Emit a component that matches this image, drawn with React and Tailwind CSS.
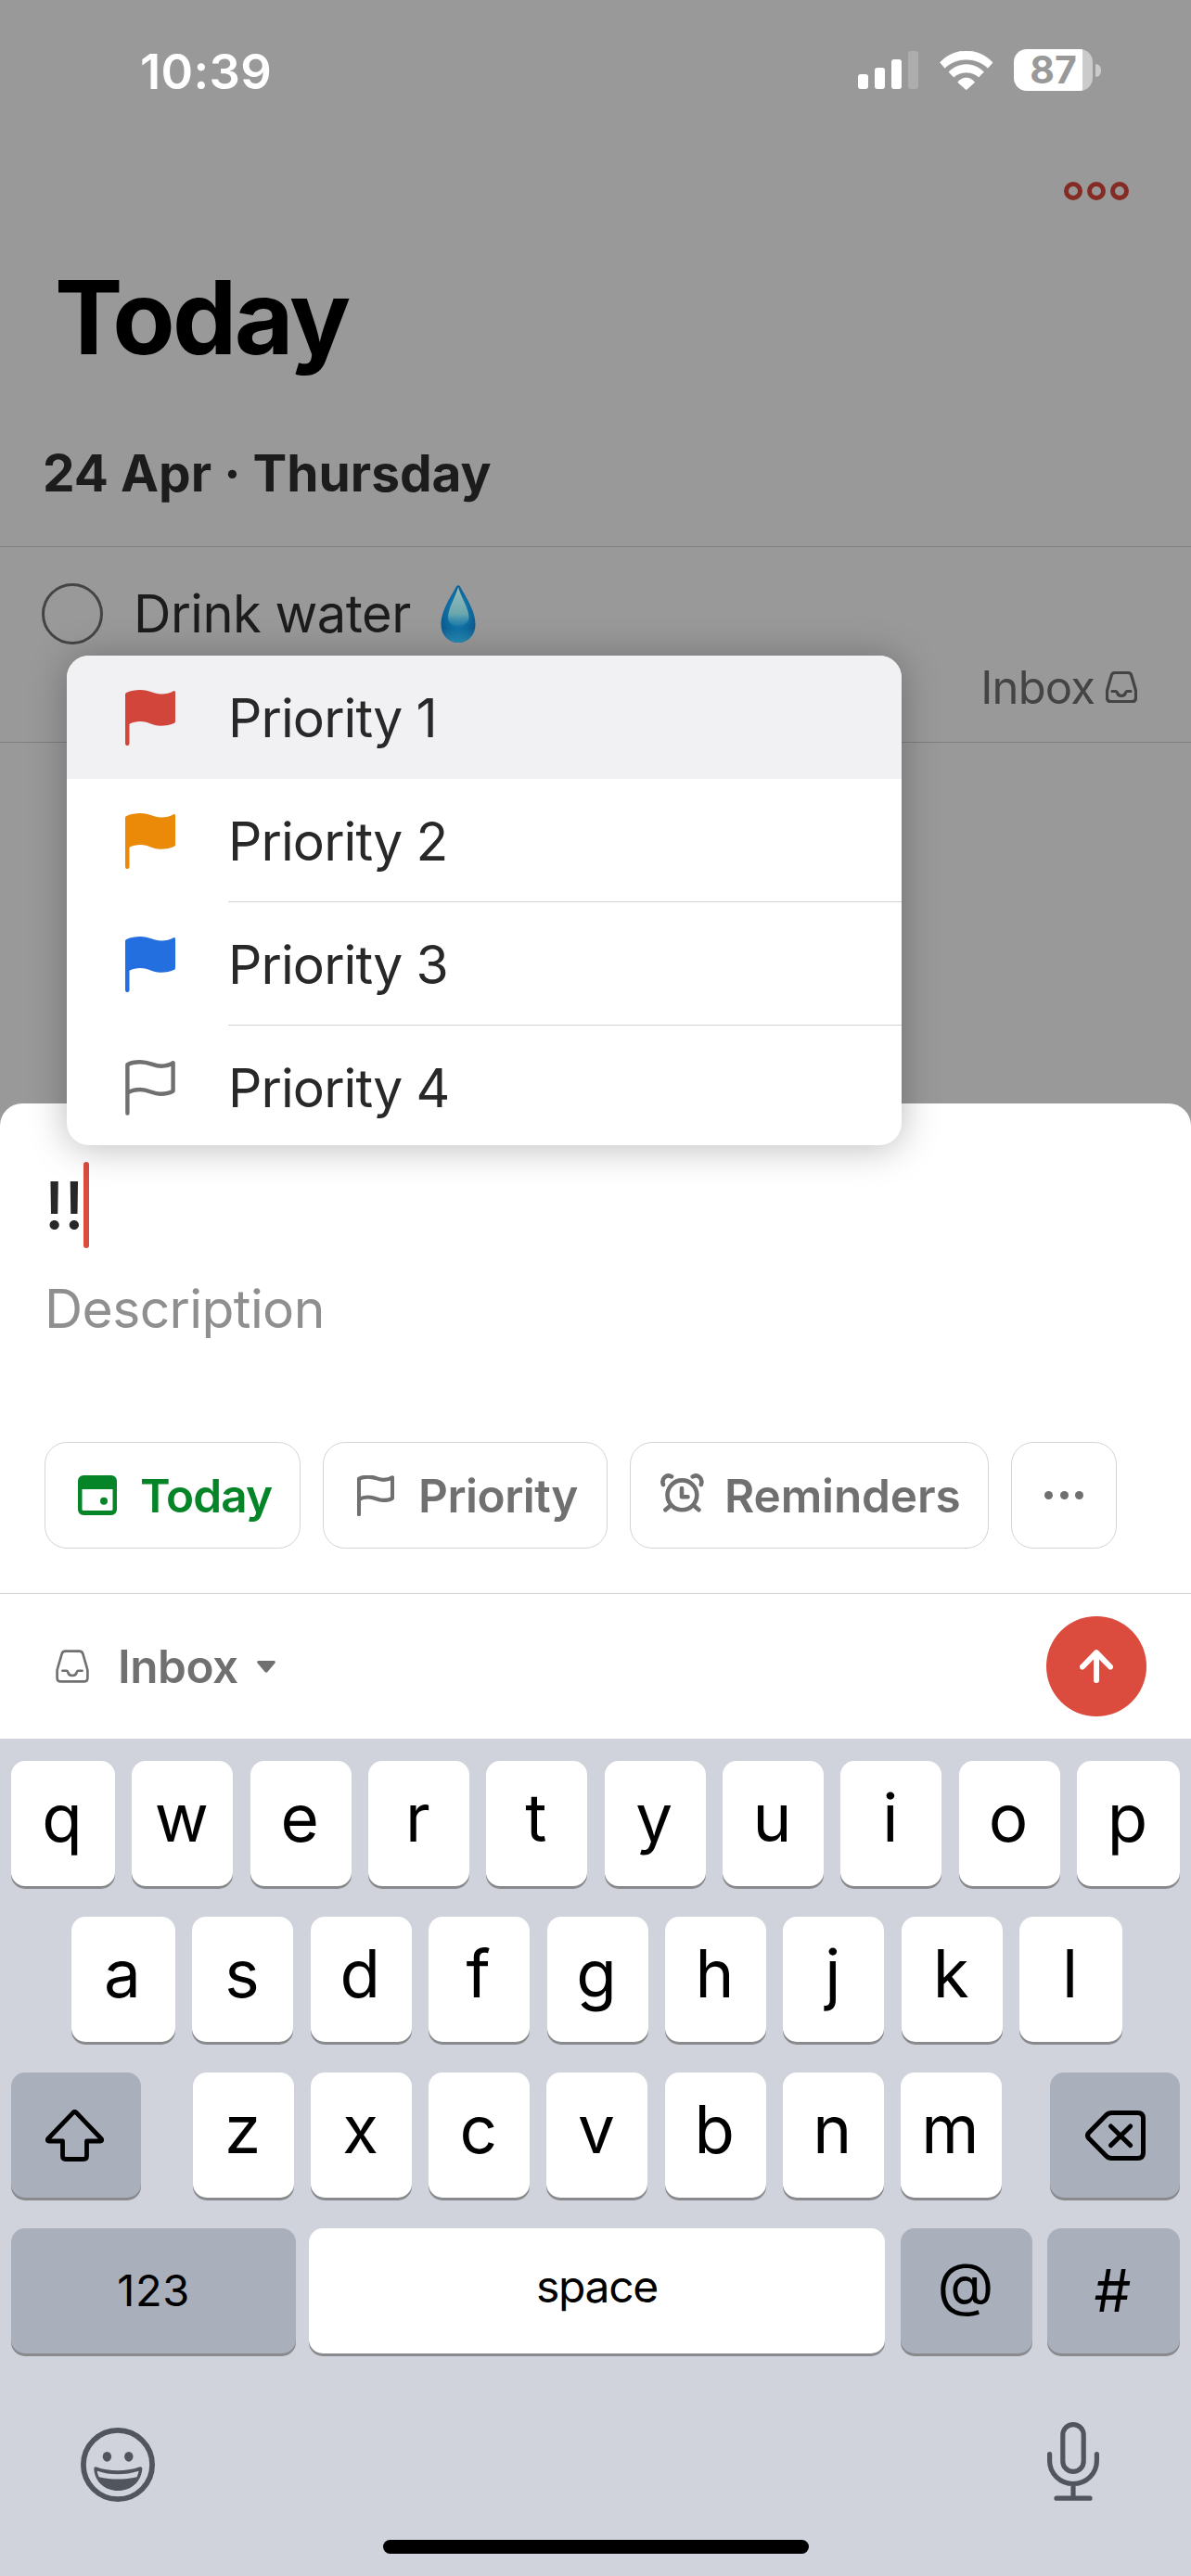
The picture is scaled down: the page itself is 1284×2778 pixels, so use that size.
import clsx from "clsx"

const priorities = [
  { label: "Priority 1", color: "text-[#d1453b]", filled: true, active: true },
  { label: "Priority 2", color: "text-[#eb8909]", filled: true },
  { label: "Priority 3", color: "text-[#246fe0]", filled: true },
  { label: "Priority 4", color: "text-[#707070]", filled: false }
]

function FlagIcon({ filled, strokeWidth = 4.4, className }) {
  return (
    <svg viewBox="0 0 54 60" className={className}>
      {filled ? (
        <path
          fill="currentColor"
          d="M0 5Q0 3.7 1.3 3C6 .8 11 0 16 0C27 0 30 4.5 39 4.5C44 4.5 48 3.3 52 1.2Q54 .4 54 2.5V34Q54 35.2 53 35.8C49 37.8 44 38.8 38 38.8C29 38.8 26 34 16 34C12 34 8 35 4.5 36.7V57.8a2.25 2.25 0 0 1-4.5 0Z"
        />
      ) : (
        <path
          fill="none"
          stroke="currentColor"
          strokeWidth={strokeWidth}
          strokeLinecap="round"
          strokeLinejoin="round"
          d="M2.4 57.6V5.2C6 3 11 2.2 16 2.2C27 2.2 30 6.7 39 6.7C44 6.7 48 5.5 51.6 3.2V33.6C48 35.8 44 36.7 38 36.7C29 36.7 26 32 16 32C11 32 6 33.3 2.4 35.5"
        />
      )}
    </svg>
  )
}

function InboxIcon({ strokeWidth, className }) {
  return (
    <svg
      viewBox="0 0 34 34"
      fill="none"
      stroke="currentColor"
      strokeWidth={strokeWidth}
      strokeLinecap="round"
      className={className}
    >
      <path d="M10 1.5H24Q27 1.5 27.8 4.5L32 19Q32.5 20.5 32.5 22V28.5Q32.5 32.5 28.5 32.5H5.5Q1.5 32.5 1.5 28.5V22Q1.5 20.5 2 19L6.2 4.5Q7 1.5 10 1.5Z" />
      <path d="M7 21.5H11Q12 21.5 12.5 23C13.8 27.6 20.2 27.6 21.5 23Q22 21.5 23 21.5H27" />
    </svg>
  )
}

function StatusBar() {
  return (
    <div className="flex h-[154px] shrink-0 items-center justify-between pl-[151px] pr-[97px]">
      <span className="text-[52.5px] font-semibold leading-none tracking-[0.3px] text-white">
        10:39
      </span>
      <div className="mb-[3px] flex items-center">
        <svg viewBox="0 0 65 41" className="h-[41px] w-[65px]" fill="#fff">
          <rect x="0" y="25" width="11" height="16" rx="3" />
          <rect x="18" y="18" width="11" height="23" rx="3" />
          <rect x="36" y="9" width="11" height="32" rx="3" />
          <rect x="54" y="0" width="11" height="41" rx="3" opacity=".2" />
        </svg>
        <svg
          viewBox="0 0 57.5 42"
          className="ml-[23px] h-[42px] w-[57.5px]"
          fill="#fff"
          stroke="#fff"
          strokeWidth=".8"
          strokeLinejoin="round"
        >
          <path d="M.6 12.4C16-4 41.4-4 57 12.4L52 18.2C39 6 18.4 6 5.6 18.2Z" />
          <path d="M10 22.6C20.5 12.1 37 12.1 47.4 22.6L42.2 28C34.5 21.3 23 21.3 15.2 28Z" />
          <path d="M19.7 33.7C25 27.5 32.4 27.5 37.7 33.7L28.7 41.8Z" />
        </svg>
        <div className="ml-[22.5px] flex h-[45px] w-[85px] items-center justify-center rounded-[14px] bg-linear-to-r from-white from-87% to-[#cbcbcb] to-87%">
          <span className="text-[41px] font-bold leading-none text-[#999999]">87</span>
        </div>
        <div className="ml-[3px] h-[14px] w-[6px] rounded-r-full bg-[#cbcbcb]" />
      </div>
    </div>
  )
}

function DropIcon({ className }) {
  const shape =
    "M17 1.5Q19 -1 21 1.5C26 11 37.5 27 37.5 42.5C37.5 54 29.5 62 19 62S.5 54 .5 42.5C.5 27 12 11 17 1.5Z"

  return (
    <svg viewBox="0 0 38 62" className={className} role="img" aria-label="💧">
      <defs>
        <radialGradient id="drop" cx=".5" cy=".48" r=".56">
          <stop offset="0" stopColor="#2b8fb8" />
          <stop offset=".55" stopColor="#0f6ea3" />
          <stop offset="1" stopColor="#0d588c" />
        </radialGradient>
        <linearGradient id="shine" x1="0" y1="0" x2="0" y2="1">
          <stop offset="0" stopColor="#9dbcbd" />
          <stop offset=".7" stopColor="#6ba7ae" />
          <stop offset="1" stopColor="#2f88ab" stopOpacity=".5" />
        </linearGradient>
        <linearGradient id="glow" x1="0" y1="0" x2="0" y2="1">
          <stop offset=".75" stopColor="#2f9bbf" stopOpacity="0" />
          <stop offset="1" stopColor="#2f9bbf" stopOpacity=".8" />
        </linearGradient>
      </defs>
      <path fill="url(#drop)" d={shape} />
      <path fill="url(#glow)" d={shape} />
      <path
        fill="url(#shine)"
        d="M19 2C22 13 30.5 25 30.5 35C30.5 41 25 43.5 19 43.5S8 41 8 35C8 25 16 13 19 2Z"
      />
    </svg>
  )
}

function TaskList() {
  return (
    <>
      <div className="flex h-[104px] shrink-0 items-center justify-end gap-[5px] pr-[67px]">
        {[0, 1, 2].map((i) => (
          <span key={i} className="h-[20px] w-[20px] rounded-full border-[5px] border-[#842c24]" />
        ))}
      </div>
      <h1 className="flex h-[168px] shrink-0 items-center pl-[59px] text-[110px] font-bold leading-none tracking-[-2.65px] text-black">
        Today
      </h1>
      <h2 className="flex h-[164px] shrink-0 items-center border-b border-[#7f7f7f] pl-[46px] pt-[5px] text-[55px] font-bold leading-none text-[#1c1c1c]">
        24 Apr · Thursday
      </h2>
      <div className="h-[211px] shrink-0 border-b border-[#7f7f7f]">
        <div className="flex h-[144px] items-center pl-[45px]">
          <span className="h-[66px] w-[66px] rounded-full border-[3px] border-[#444444]" />
          <span className="ml-[33px] text-[56px] leading-none tracking-[-0.5px] text-[#1c1c1c]">
            Drink water
          </span>
          <DropIcon className="ml-[32px] h-[62px] w-[38px]" />
        </div>
        <div className="flex h-[14px] items-center justify-end pr-[58px] text-[#444444]">
          <span className="text-[49px] leading-none tracking-[-0.9px]">Inbox</span>
          <InboxIcon strokeWidth={3.2} className="ml-[12px] h-[34px] w-[34px]" />
        </div>
      </div>
      <div className="h-[389px] shrink-0" />
    </>
  )
}

function PriorityMenu() {
  return (
    <div className="absolute left-[72px] top-[707px] h-[528px] w-[900px] overflow-hidden rounded-[24px] bg-white shadow-[0_2px_42px_rgba(0,0,0,0.28)]">
      {priorities.map(({ label, color, filled, active }, i) => (
        <div
          key={label}
          className={clsx("flex h-[133px] items-center pl-[63px]", active && "bg-[#f1f1f4]")}
        >
          <FlagIcon filled={filled} className={clsx("h-[60px] w-[54px]", color)} />
          <div
            className={clsx(
              "ml-[57px] flex h-full grow items-center border-b pt-[2px] text-[57px] leading-none tracking-[-0.9px] text-[#282828]",
              i === 1 || i === 2 ? "border-[#d2d2d2]" : "border-transparent"
            )}
          >
            {label}
          </div>
        </div>
      ))}
    </div>
  )
}

function Chip({ className, children }) {
  return (
    <button
      className={clsx(
        "flex h-[115px] items-center rounded-[24px] border border-[#d4d4d4] text-[49.5px] font-semibold leading-none",
        className
      )}
    >
      {children}
    </button>
  )
}

function QuickAdd() {
  return (
    <div className="h-[685px] shrink-0 rounded-t-[24px] bg-white pt-[63px]">
      <div className="flex h-[93px] items-center pl-[48px]">
        <span className="text-[70px] font-medium leading-none text-[#282828]">!!</span>
        <span className="-ml-[1px] h-[93px] w-[6px] rounded-full bg-[#db4c3f]" />
      </div>
      <p className="flex h-[130px] items-center pl-[48px] text-[57px] leading-none tracking-[-0.6px] text-[#8f8f8f]">
        Description
      </p>
      <div className="mt-[79px] flex gap-[24px] pl-[48px] text-[#707070]">
        <Chip className="w-[276px] pl-[35px] text-[#058527]">
          <svg viewBox="0 0 42 43" className="h-[43px] w-[42px]" fill="currentColor">
            <path
              fillRule="evenodd"
              d="M6 0H36a6 6 0 0 1 6 6V37a6 6 0 0 1-6 6H6a6 6 0 0 1-6-6V6a6 6 0 0 1 6-6ZM4.5 15V36.5a1.5 1.5 0 0 0 1.5 1.5H36a1.5 1.5 0 0 0 1.5-1.5V15Z"
            />
            <circle cx="28" cy="27.8" r="4" />
          </svg>
          <span className="ml-[25px] pt-[2px] tracking-[-0.86px]">Today</span>
        </Chip>
        <Chip className="w-[307px] pl-[36px]">
          <FlagIcon strokeWidth={5.6} className="h-[44px] w-[40px]" />
          <span className="ml-[26px] pt-[2px] tracking-[-0.5px]">Priority</span>
        </Chip>
        <Chip className="w-[387px] pl-[32px]">
          <svg
            viewBox="0 0 47 42"
            className="mb-[5px] h-[42px] w-[47px]"
            fill="none"
            stroke="currentColor"
            strokeWidth="4.6"
            strokeLinecap="round"
            strokeLinejoin="round"
          >
            <circle cx="23.4" cy="23.3" r="15.9" />
            <path d="M3 12C.6 5.5 6.5 .2 12 3.4M43.8 12C46.2 5.5 40.3 .2 34.8 3.4" />
            <path d="M11 34.5L5.4 39.2M35.8 34.5L41.4 39.2" />
            <path d="M23 16V25.3H29.5" />
          </svg>
          <span className="ml-[22px] pt-[2px] tracking-[-0.13px]">Reminders</span>
        </Chip>
        <Chip className="w-[114px] justify-center gap-[7.5px]">
          {[0, 1, 2].map((i) => (
            <span key={i} className="h-[9px] w-[9px] rounded-full bg-[#707070]" />
          ))}
        </Chip>
      </div>
      <div className="mt-[48px] flex h-[157px] items-center border-t border-[#d2d2d2] pl-[60px] pr-[48px] text-[#707070]">
        <InboxIcon strokeWidth={2.5} className="h-[36px] w-[36px]" />
        <span className="ml-[31px] pt-[2px] text-[49.5px] font-semibold leading-none tracking-[-0.49px]">
          Inbox
        </span>
        <svg viewBox="0 0 20 13" className="ml-[20px] h-[13px] w-[20px]" fill="currentColor">
          <path d="M1.5 0H18.5Q20.6 .4 19.4 2.4L11.4 12Q10 13.4 8.6 12L.6 2.4Q-.6 .4 1.5 0Z" />
        </svg>
        <button className="ml-auto flex h-[108px] w-[108px] items-center justify-center rounded-full bg-[#db4c3f]">
          <svg
            viewBox="0 0 36 36"
            className="h-[36px] w-[36px]"
            fill="none"
            stroke="#fff"
            strokeWidth="6"
            strokeLinecap="round"
            strokeLinejoin="round"
          >
            <path d="M18 33V4M3 18.5L18 3.2L33 18.5" />
          </svg>
        </button>
      </div>
    </div>
  )
}

function Key({ dark, className, children }) {
  return (
    <div
      className={clsx(
        "flex h-[135px] items-center justify-center rounded-[15px] leading-none text-black shadow-[0_3px_0_#898a8d]",
        dark ? "bg-[#a9afbb]" : "bg-white",
        className
      )}
    >
      {children}
    </div>
  )
}

function Letters({ keys, first = "w-[109px]", last = "w-[109px]" }) {
  return [...keys].map((k, i) => (
    <Key
      key={k}
      className={clsx(
        "pb-[13px] pr-[2px] text-[71px]",
        i === 0 ? first : i === keys.length - 1 ? last : "w-[109px]"
      )}
    >
      {k}
    </Key>
  ))
}

function Keyboard() {
  return (
    <div className="flex h-[903px] shrink-0 flex-col bg-[#d0d3dc] pt-[24px]">
      <div className="flex justify-between px-[12px]">
        <Letters keys="qwertyuiop" first="w-[112px]" last="w-[111px]" />
      </div>
      <div className="mt-[33px] flex justify-between pl-[77px] pr-[74px]">
        <Letters keys="asdfghjkl" first="w-[112px]" last="w-[111px]" />
      </div>
      <div className="mt-[33px] flex px-[12px]">
        <Key dark className="w-[140px] pr-[3px]">
          <svg
            viewBox="0 0 63 56"
            className="h-[56px] w-[63px]"
            fill="none"
            stroke="#000"
            strokeWidth="4.8"
            strokeLinejoin="round"
          >
            <path d="M29.8 3.3Q31.5 1.6 33.2 3.3L60.2 31.5Q61.6 34 59.4 34H44.5V50Q44.5 53.5 41 53.5H22Q18.5 53.5 18.5 50V34H3.6Q1.4 34 2.8 31.5Z" />
          </svg>
        </Key>
        <div className="ml-[56px] flex w-[872px] justify-between">
          <Letters keys="zxcvbnm" />
        </div>
        <Key dark className="ml-auto w-[140px]">
          <svg
            viewBox="0 0 65 54"
            className="h-[54px] w-[65px]"
            fill="none"
            stroke="#000"
            strokeWidth="5"
            strokeLinecap="round"
            strokeLinejoin="round"
          >
            <path d="M28.5 2.5H56.5Q62.5 2.5 62.5 8.5V45.5Q62.5 51.5 56.5 51.5H28.5Q25 51.5 22.5 49L3.8 30Q1.2 27 3.8 24L22.5 5Q25 2.5 28.5 2.5Z" />
            <path d="M27.5 17L48.7 37.6M48.7 17L27.5 37.6" />
          </svg>
        </Key>
      </div>
      <div className="mt-[33px] flex px-[12px]">
        <Key dark className="w-[307px] pb-[2px] text-[47px] tracking-[0.6px]">123</Key>
        <Key className="ml-[14px] w-[621px] pb-[9px] text-[48px] tracking-[-1.3px]">space</Key>
        <Key dark className="ml-[17px] w-[142px] pb-[15px] pr-[2px] text-[63px]">@</Key>
        <Key dark className="ml-[16px] w-[143px] pr-[2px] text-[63px]">#</Key>
      </div>
      <div className="flex h-[201px] items-start justify-between pl-[87px] pr-[99px] pt-[74px]">
        <svg viewBox="0 0 80 80" className="mt-[6px] h-[80px] w-[80px] text-[#51555e]">
          <circle cx="40" cy="40" r="37.1" fill="none" stroke="currentColor" strokeWidth="5.8" />
          <g fill="currentColor">
            <ellipse cx="28.4" cy="31.3" rx="4.7" ry="5.4" />
            <ellipse cx="51.8" cy="31.3" rx="4.7" ry="5.4" />
            <path d="M17 42.5C24 45 32 46.3 40 46.3S56 45 63 42.5Q66.5 41.5 66.3 45C65 58.5 54.5 68 40.3 68S15.5 58.5 14.3 45Q14 41.5 17 42.5Z" />
          </g>
          <path
            fill="#d0d3dc"
            d="M17.8 46.8C25 49.3 32 50.2 40 50.2S55 49.3 62.5 46.8C62 49.5 61.5 51.5 60.5 53.3C54 55 47 55.6 40 55.6S26 55 19.8 53.3C18.7 51.3 18 49 17.8 46.8Z"
          />
        </svg>
        <svg
          viewBox="0 0 56 85"
          className="h-[85px] w-[56px] text-[#51555e]"
          fill="none"
          stroke="currentColor"
          strokeWidth="5.2"
          strokeLinecap="round"
        >
          <rect x="16.8" y="2.6" width="22.4" height="50.8" rx="11.2" />
          <path d="M2.6 34.5V42A25.4 24.5 0 0 0 53.4 42V34.5M28 66.5V82M10 82.2H46" />
        </svg>
      </div>
      <div className="mx-auto h-[15px] w-[459px] rounded-full bg-black" />
    </div>
  )
}

export default function App() {
  return (
    <div className="relative flex h-[2778px] w-[1284px] flex-col overflow-hidden bg-[#999999] font-['Inter',sans-serif]">
      <StatusBar />
      <TaskList />
      <QuickAdd />
      <Keyboard />
      <PriorityMenu />
    </div>
  )
}
